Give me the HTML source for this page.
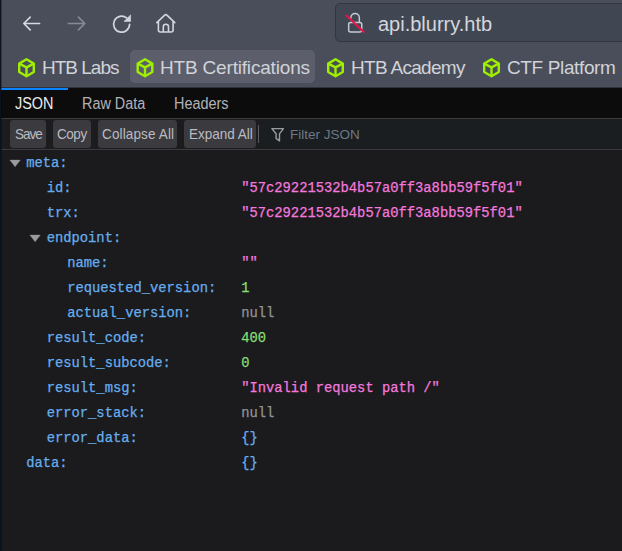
<!DOCTYPE html>
<html><head><meta charset="utf-8">
<style>
*{box-sizing:border-box}
html,body{margin:0;padding:0}
body{width:622px;height:551px;overflow:hidden;position:relative;background:#1b1b1d;font-family:"Liberation Sans",sans-serif}
.abs{position:absolute}
#chrome{left:0;top:0;width:622px;height:88px;background:#4a4e5a}
#leftb{left:0;top:0;width:1px;height:551px;background:#0b1220;z-index:10}
#url{left:335px;top:3px;width:300px;height:39px;background:#414752;border:1px solid #33363f;border-radius:5px}
.utext{left:378px;top:9.6px;font-size:20px;color:#d4d6dc;white-space:pre;line-height:28px}
.bm{position:absolute;top:50px;height:33px}
.bmt{position:absolute;font-size:19px;color:#d0d3d9;white-space:pre;line-height:24px;top:55.5px}
#hover{left:130px;top:50px;width:185px;height:33px;background:#5c5f6b;border-radius:5px}
#blue{left:1px;top:88px;width:67px;height:2px;background:#0a84ff}
#tabs{left:0;top:88px;width:622px;height:30px;background:#0c0c0d}
#tabline{left:0;top:118px;width:622px;height:1px;background:#3b3b40}
.tab{position:absolute;top:95px;font-size:15.6px;line-height:18px;color:#b2b2b6;white-space:pre;transform:scaleX(0.925);transform-origin:0 0}
#tb{left:0;top:119px;width:622px;height:30px;background:#1c1c1f}
#tbline{left:0;top:149px;width:622px;height:1px;background:#3b3b40}
.btn{position:absolute;top:120px;height:27.6px;background:#3a3a3f;border-radius:3px;color:#bcbcc0;font-size:13.5px;line-height:28.5px;white-space:pre}
.btn span{position:absolute;top:0;font-size:14.6px;transform:scaleX(0.925);transform-origin:0 0}
#filter{left:260px;top:120.5px;width:362px;height:26px;background:#1a1e21}
#sep{left:258px;top:125px;width:1px;height:18px;background:#5c5c61}
.ftext{left:290px;top:125.6px;font-size:13.5px;line-height:18px;color:#6d7885;white-space:pre}
.row{position:absolute;font-family:"Liberation Mono",monospace;font-size:13.8px;line-height:18px;white-space:pre;margin-top:1.3px;margin-left:0.7px;-webkit-text-stroke:0.25px currentColor}
.k{color:#66aeee}
.s{color:#f478de}
.n{color:#86de74}
.nl{color:#939395}
.o{color:#66aeee}
.tri{position:absolute;width:0;height:0;border-left:5px solid transparent;border-right:5px solid transparent;border-top:6px solid #939395}
</style></head><body>
<div id="leftb" class="abs"></div>
<div class="abs" style="left:1px;top:0;width:1px;height:551px;background:rgba(0,0,0,0.3);z-index:10"></div>
<div id="chrome" class="abs"></div>
<div class="abs" style="left:0;top:87px;width:622px;height:1px;background:#30323a"></div>

<!-- nav icons -->
<svg class="abs" style="left:0;top:0" width="200" height="46" viewBox="0 0 200 46">
  <g fill="none" stroke="#d5d9e0" stroke-width="1.6" stroke-linecap="round" stroke-linejoin="round">
    <path d="M23.8 23.5 H39.6 M23.8 23.5 L30.2 17.1 M23.8 23.5 L30.2 29.9"/>
  </g>
  <g fill="none" stroke="#878a94" stroke-width="1.6" stroke-linecap="round" stroke-linejoin="round">
    <path d="M84.8 23.5 H68.4 M84.8 23.5 L78.4 17.1 M84.8 23.5 L78.4 29.9"/>
  </g>
  <path d="M129.6 24.3 A8 8 0 1 1 126.6 17.9" fill="none" stroke="#d3d6dd" stroke-width="1.7" stroke-linecap="round"/>
  <path d="M130.6 14.9 L130.6 21.4 L124 21.4 Z" fill="#d3d6dd" stroke="#d3d6dd" stroke-width="0.6" stroke-linejoin="round"/>
  <g fill="none" stroke="#d3d6dd" stroke-width="1.6" stroke-linejoin="round" stroke-linecap="round">
    <path d="M156.8 22.6 L164.7 15.1 Q165.8 14.2 166.9 15.1 L174.8 22.6 M158.4 21.4 V30 Q158.4 32 160.4 32 H171.1 Q173.1 32 173.1 30 V21.4 M163.3 32 V26.8 A2.6 2.6 0 0 1 168.5 26.8 V32"/>
  </g>
</svg>

<div id="url" class="abs"></div>
<svg class="abs" style="left:342px;top:8px" width="28" height="30" viewBox="0 0 28 30">
  <g fill="none" stroke="#c6cad2" stroke-width="1.5">
    <path d="M8.85 10.6 V9.8 A4.25 4.25 0 0 1 17.35 9.8 V14.4"/>
    <rect x="6.65" y="14.55" width="13.1" height="9.4" rx="2"/>
  </g>
  <path d="M4.5 7.5 L21.8 24" stroke="#e3164d" stroke-width="2.1" stroke-linecap="round"/>
</svg>
<div class="abs utext">api.blurry.htb</div>

<div id="hover" class="abs"></div>
<svg class="abs" style="left:0;top:50px" width="622" height="36" viewBox="0 0 622 36">
  <defs>
    <g id="cube" fill="none" stroke="#9fef00" stroke-width="2.4" stroke-linejoin="round">
      <path d="M9 1.5 L16.3 5.8 V14.2 L9 18.5 L1.7 14.2 V5.8 Z"/>
      <path d="M1.7 5.8 L9 9.6 L16.3 5.8 M9 9.6 V18.5"/>
    </g>
  </defs>
  <use href="#cube" x="17.5" y="7.8"/>
  <use href="#cube" x="136" y="7.8"/>
  <use href="#cube" x="326.5" y="7.8"/>
  <use href="#cube" x="482.5" y="7.8"/>
</svg>
<div class="bmt" style="left:42px;letter-spacing:-1px">HTB Labs</div>
<div class="bmt" style="left:160px;letter-spacing:-0.18px">HTB Certifications</div>
<div class="bmt" style="left:351px;letter-spacing:-0.7px">HTB Academy</div>
<div class="bmt" style="left:507px;letter-spacing:-0.37px">CTF Platform</div>

<div id="tabs" class="abs"></div>
<div id="blue" class="abs"></div>
<div id="tabline" class="abs"></div>
<div class="tab" style="left:15px;color:#ececee">JSON</div>
<div class="tab" style="left:82px">Raw Data</div>
<div class="tab" style="left:174px">Headers</div>

<div id="tb" class="abs"></div>
<div id="tbline" class="abs"></div>
<div class="btn" style="left:10px;width:36px"><span style="left:4.5px;letter-spacing:-1.1px">Save</span></div>
<div class="btn" style="left:53px;width:38px"><span style="left:4px;letter-spacing:-0.5px">Copy</span></div>
<div class="btn" style="left:97.6px;width:79.8px"><span style="left:4.5px;letter-spacing:0.15px">Collapse All</span></div>
<div class="btn" style="left:184px;width:72px"><span style="left:4.5px">Expand All</span></div>
<div id="sep" class="abs"></div>
<div id="filter" class="abs"></div>
<svg class="abs" style="left:266px;top:122px" width="24" height="24" viewBox="0 0 24 24">
  <path d="M5.9 6.6 H17.4 L13.5 11.8 V18.9 L10.1 16.4 V11.8 Z" fill="none" stroke="#9b9b9f" stroke-width="1.4" stroke-linejoin="round"/>
</svg>
<div class="abs ftext">Filter JSON</div>

<!-- tree -->
<svg class="abs" style="left:0;top:150px" width="50" height="100" viewBox="0 150 50 100"><path d="M9.9 160.1 H20.3 L15.1 166.7 Z M29.9 235.1 H40.3 L35.1 241.7 Z" fill="#9a9a9c" stroke="#9a9a9c" stroke-width="0.4" stroke-linejoin="round"/></svg>
<div class="row k" style="left:25.5px;top:154px">meta:</div>
<div class="row k" style="left:46px;top:179px">id:</div>
<div class="row s" style="left:240.5px;top:179px">"57c29221532b4b57a0ff3a8bb59f5f01"</div>
<div class="row k" style="left:46px;top:204px">trx:</div>
<div class="row s" style="left:240.5px;top:204px">"57c29221532b4b57a0ff3a8bb59f5f01"</div>
<div class="row k" style="left:46px;top:229px">endpoint:</div>
<div class="row k" style="left:66.5px;top:254px">name:</div>
<div class="row s" style="left:240.5px;top:254px">""</div>
<div class="row k" style="left:66.5px;top:279px">requested_version:</div>
<div class="row n" style="left:240.5px;top:279px">1</div>
<div class="row k" style="left:66.5px;top:304px">actual_version:</div>
<div class="row nl" style="left:240.5px;top:304px">null</div>
<div class="row k" style="left:46px;top:329px">result_code:</div>
<div class="row n" style="left:240.5px;top:329px">400</div>
<div class="row k" style="left:46px;top:354px">result_subcode:</div>
<div class="row n" style="left:240.5px;top:354px">0</div>
<div class="row k" style="left:46px;top:379px">result_msg:</div>
<div class="row s" style="left:240.5px;top:379px">"Invalid request path /"</div>
<div class="row k" style="left:46px;top:404px">error_stack:</div>
<div class="row nl" style="left:240.5px;top:404px">null</div>
<div class="row k" style="left:46px;top:429px">error_data:</div>
<div class="row o" style="left:240.5px;top:429px">{}</div>
<div class="row k" style="left:25.5px;top:454px">data:</div>
<div class="row o" style="left:240.5px;top:454px">{}</div>
</body></html>
